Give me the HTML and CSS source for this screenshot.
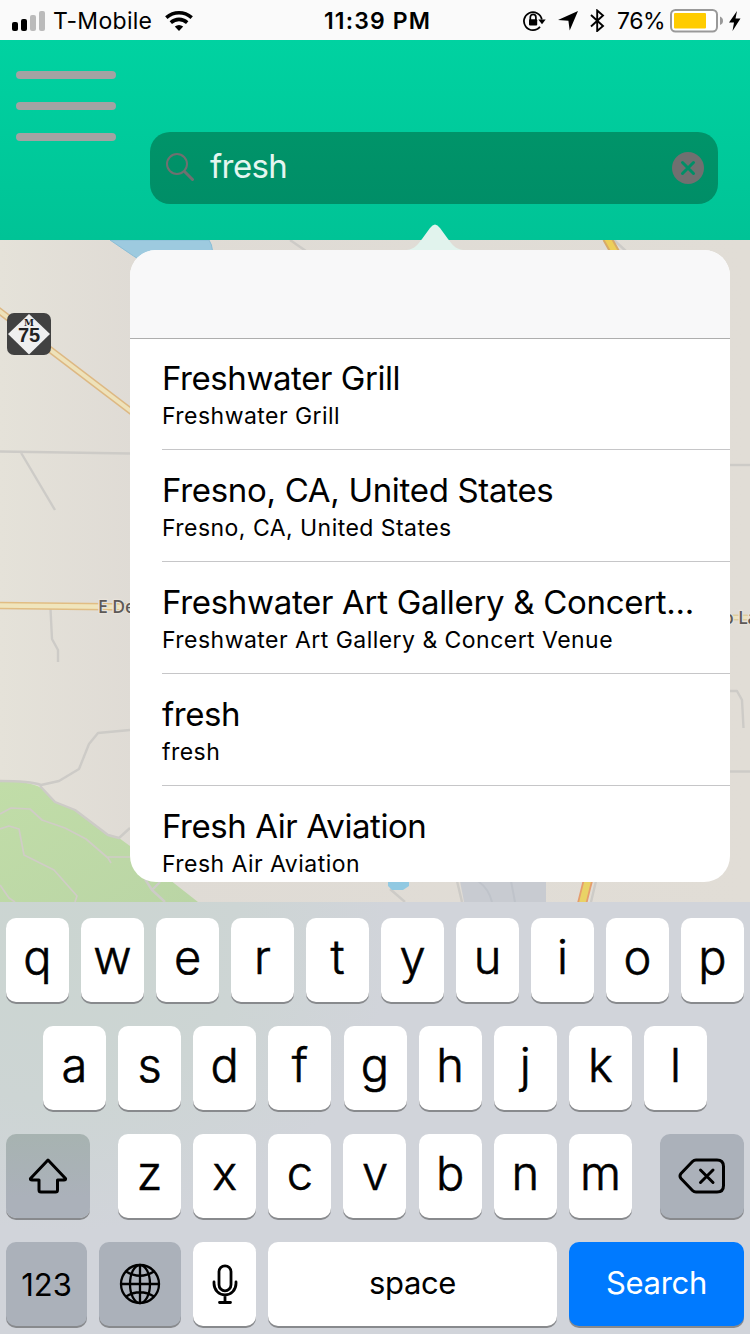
FILE: index.html
```html
<!DOCTYPE html>
<html lang="en">
<head>
<meta charset="utf-8">
<title>Map search</title>
<link rel="stylesheet" href="styles.css">
</head>
<body>
<div class="screen">
  <div class="status">
    <div class="status-left">
      <svg class="signal" width="34" height="20" viewBox="0 0 34 20"><rect x="0" y="11" width="6" height="9" rx="2"/><rect x="9" y="8" width="6" height="12" rx="2"/><rect x="18" y="4" width="6" height="16" rx="2" fill="#bbb"/><rect x="27" y="0" width="6" height="20" rx="2" fill="#bbb"/></svg>
      <span class="carrier">T-Mobile</span>
      <svg class="wifi" width="28" height="20" viewBox="0 0 28 20"><g fill="none" stroke="#000" stroke-width="3.6"><path d="M1.3 6.7Q7 1.8 14 1.8T26.7 6.7"/><path d="M5.8 11.6Q9.5 8.4 14 8.4T22.2 11.6"/></g><path d="M14 20L9.8 15.6Q14 12.3 18.2 15.6Z"/></svg>
    </div>
    <span class="clock">11:39 PM</span>
    <div class="status-right">
      <svg class="lock" width="23" height="22" viewBox="0 0 23 22"><g fill="none" stroke="#000"><path stroke-width="1.8" d="M18.800 9.500A9 9 0 1 0 17 16.800"/><path stroke-width="1.7" d="M7.300 10V7.200a2.800 2.800 0 0 1 5.600 0V10"/></g><rect x="6" y="9.300" width="8.200" height="6.200" rx="1"/><path d="M15.300 9.600h7.400l-3.700 4.600z"/></svg>
      <svg class="arrow" width="20" height="20" viewBox="0 0 20 20"><path d="M20 0L11.7 19.5L10.4 9.8L0 9Z"/></svg>
      <svg class="bt" width="15" height="23" viewBox="0 0 15 23"><path fill="none" stroke="#000" stroke-width="1.9" d="M1 6L13 17L7.2 22V1.5L13 6.5L1 17.5"/></svg>
      <span class="percent">76%</span>
      <svg class="battery" width="53" height="24" viewBox="0 0 53 24"><rect x="1" y="1" width="46" height="21.5" rx="4.5" fill="#fff" stroke="#999" stroke-width="2"/><path d="M50 7.5q3 1.2 3 4.3t-3 4.3z" fill="#999"/><rect x="4" y="4" width="32" height="15.5" rx="1" fill="#fc0"/></svg>
      <svg class="bolt" width="12" height="20" viewBox="0 0 12 20"><path d="M8 0L0 11.6H5L3.5 20L11.5 7.6H6.5Z"/></svg>
    </div>
  </div>

  <div class="header">
    <div class="menu"><i></i><i></i><i></i></div>
    <div class="search">
      <svg class="glass" width="30" height="30" viewBox="0 0 30 30"><g fill="none" stroke="#707070"><circle cx="11" cy="11" r="10" stroke-width="2"/><path stroke-width="3" stroke-linecap="round" d="M19 19L26.500 26.500"/></g></svg>
      <span class="query">fresh</span>
      <svg class="clear" width="32" height="32" viewBox="0 0 32 32"><circle cx="16" cy="16" r="16" fill="#707070"/><path d="M10.5 10.5L21.5 21.5M21.5 10.5L10.5 21.5" stroke="#008f67" stroke-width="3" stroke-linecap="round"/></svg>
    </div>
  </div>

  <div class="map">
    <svg class="map-art" width="750" height="662" viewBox="0 240 750 662">
      <defs><linearGradient id="land"><stop offset="0" stop-color="#e5e2d9"/><stop offset=".18" stop-color="#dfdbd5"/><stop offset="1" stop-color="#e1ddd6"/></linearGradient>
      <linearGradient id="park" x1="0" y1="0" x2="1" y2="1"><stop offset="0" stop-color="#c1dda8"/><stop offset="1" stop-color="#bad5a5"/></linearGradient></defs>
      <rect y="240" width="750" height="662" fill="url(#land)"/>
      <path d="M110 240Q132 256 160 272H212Q215 248 209 240Z" fill="#9dcadf" stroke="#8abdd6"/>
      <path d="M0 781Q30 781 41 788L55 802L75 810L108 835L119 838L130 846L170 880L198 902H0Z" fill="url(#park)"/>
      <g fill="none" stroke="#cdcbc7" stroke-width="2.4" stroke-linejoin="round">
        <path d="M0 451.500L130 453.500M20 451L55 510"/>
        <path d="M50.500 609L52 639L58 650V662"/>
        <path d="M0 781Q30 781 41 785L59 781L79 769L89 744L98 733L130 730"/>
        <path d="M40 786L55 802L75 810L108 835L119 838L130 828"/>
        <path d="M145 879L152 890L165 902M160 882L152 890M290 240L306 251M614 240L627 252"/>
        <path d="M730 465H750"/>
        <path d="M730 691H737L742 700L743.500 728M730 771.500H750"/>
        <path d="M390 889L405 902M457 881L462 902M596 881L591 902"/>
      </g>
      <path d="M460 881H546V902H464Z" fill="#c8cbd1"/>
      <path d="M478 881Q489 889 492 902M511 881L515 902" fill="none" stroke="#bfc3ca" stroke-width="2"/>
      <g fill="none" stroke="#d0ccc6" stroke-width="1.7" stroke-linejoin="round">
        <path d="M0 814L11 808L30 809L42 820L65 828L86 839L108 858L111 863M107 857H130"/>
        <path d="M0 829L9 826L19 829L24 855L54 870L77 896L75 902M0 885L9 898L15 902"/>
      </g>
      <path d="M388 881H409V886L403 890H392L388 886Z" fill="#91c9e2"/>
      <g fill="none">
        <path d="M-2 310L132 412" stroke="#ddb883" stroke-width="7"/><path d="M-2 310L132 412" stroke="#eee2ba" stroke-width="4"/>
        <path d="M0 605.500L130 607" stroke="#e1bd83" stroke-width="7.500"/><path d="M0 605.500L130 607" stroke="#f0e5bc" stroke-width="4.500"/>
        <path d="M730 617.500H750" stroke="#decca0" stroke-width="6"/><path d="M730 617.500H750" stroke="#eee3c0" stroke-width="3"/>
        <path d="M607 238L616 254" stroke="#d6aa68" stroke-width="10"/><path d="M607 238L616 254" stroke="#edcf58" stroke-width="6"/>
        <path d="M588 880L582 904" stroke="#e59d6d" stroke-width="10"/><path d="M588 880L582 904" stroke="#e9d266" stroke-width="6.500"/>
      </g>
      <g class="road-name"><text x="98" y="612.500">E De</text><text x="723" y="624">o La</text></g>
      <rect x="7" y="313" width="44" height="42" rx="7" fill="#414141"/>
      <path d="M29 314L50 334L29 354.500L8 334Z" fill="#efefef"/>
      <text class="shield-m" x="29" y="326">M</text><text class="shield-n" x="29" y="342">75</text>
    </svg>
  </div>

  <div class="popover">
    <svg class="tip" width="60" height="27" viewBox="0 0 60 27"><path d="M2 26C10 25 13 20 17 15L25 4Q30 -3 35 4L43 15C47 20 50 25 58 26V27H2Z" fill="#e1f3ed"/></svg>
    <div class="results">
      <div class="results-head"></div>
      <div class="row first"><div class="title">Freshwater Grill</div><div class="sub">Freshwater Grill</div></div>
      <div class="row"><div class="title long">Fresno, CA, United States</div><div class="sub">Fresno, CA, United States</div></div>
      <div class="row"><div class="title long">Freshwater Art Gallery &amp; Concert...</div><div class="sub">Freshwater Art Gallery &amp; Concert Venue</div></div>
      <div class="row"><div class="title">fresh</div><div class="sub">fresh</div></div>
      <div class="row"><div class="title">Fresh Air Aviation</div><div class="sub">Fresh Air Aviation</div></div>
    </div>
  </div>

  <div class="keyboard">
    <div class="keys"><b>q</b><b>w</b><b>e</b><b>r</b><b>t</b><b>y</b><b>u</b><b>i</b><b>o</b><b>p</b></div>
    <div class="keys home"><b>a</b><b>s</b><b>d</b><b>f</b><b>g</b><b>h</b><b>j</b><b>k</b><b>l</b></div>
    <div class="keys third">
      <b class="dark wide shift"><svg width="40" height="36" viewBox="0 0 40 36"><path fill="none" stroke="#000" stroke-width="3" stroke-linejoin="round" d="M20 2L37.500 20.500Q38 22 36 22H29.500V32Q29.500 34 27.500 34H13Q11 34 11 32V22H4Q2 22 2.500 20.500Z"/></svg></b>
      <div class="letters"><b>z</b><b>x</b><b>c</b><b>v</b><b>b</b><b>n</b><b>m</b></div>
      <b class="dark wide"><svg width="48" height="36" viewBox="0 0 48 36"><g fill="none" stroke="#000" stroke-width="3" stroke-linejoin="round" stroke-linecap="round"><path d="M18 2H39Q45.500 2 45.500 8.500V27.500Q45.500 34 39 34H18Q16 34 14.500 32.500L3 20.500Q1 18 3 15.500L14.500 3.500Q16 2 18 2Z"/><path d="M22.500 12L35 24.500M35 12L22.500 24.500"/></g></svg></b>
    </div>
    <div class="keys fourth">
      <b class="dark num">123</b>
      <b class="dark globe"><svg width="42" height="42" viewBox="0 0 42 42"><g fill="none" stroke="#000" stroke-width="2.300"><circle cx="21" cy="21" r="19"/><ellipse cx="21" cy="21" rx="10" ry="19"/><path d="M21 2V40M2 21H40M7 8.500Q21 17 35 8.500M7 33.500Q21 25 35 33.500"/></g></svg></b>
      <b class="mic"><svg width="26" height="40" viewBox="0 0 26 40"><g fill="none" stroke="#000" stroke-width="2.800" stroke-linecap="round"><rect x="7" y="1.800" width="12" height="25" rx="6"/><path d="M2 18V19.500A11 11.500 0 0 0 24 19.500V18M13 31V38M7.500 38.500H18.500"/></g></svg></b>
      <b class="space">space</b>
      <b class="go">Search</b>
    </div>
  </div>
</div>
</body>
</html>
```
FILE: styles.css
```css
* { box-sizing: border-box; }
body { margin: 0; font-family: Inter, "Liberation Sans", sans-serif; color: #000; }
svg { display: block; flex: none; }
.screen { position: relative; width: 750px; height: 1334px; overflow: hidden; display: flex; flex-direction: column; }

.status { height: 40px; flex: none; background: #fafafa; display: grid; grid-template-columns: 1fr auto 1fr; align-items: center; font-size: 23px; line-height: 40px; white-space: nowrap; }
.status span { padding-top: 1px; }
.status-left { display: flex; align-items: center; padding-left: 12px; }
.carrier { margin-left: 7px; width: 105px; letter-spacing: .3px; }
.wifi { margin-left: 7px; }
.clock { font-weight: 600; letter-spacing: 1.15px; padding-left: 5px; }
.status-right { display: flex; align-items: center; justify-content: flex-end; padding-right: 9px; }
.arrow { margin-left: 12px; }
.bt { margin-left: 12px; }
.percent { margin-left: 12px; width: 48px; letter-spacing: -.5px; }
.battery { margin-left: 5px; }
.bolt { margin-left: 6px; }

.header { height: 200px; flex: none; background: linear-gradient(#00d2a1, #00c396); display: flex; padding: 30px 32px 0 16px; }
.menu { width: 100px; display: flex; flex-direction: column; gap: 23px; padding-top: 1px; }
.menu i { height: 8px; border-radius: 4px; background: #a3a3a3; }
.search { margin: 62px 0 0 34px; width: 568px; height: 72px; border-radius: 20px; background: linear-gradient(#009469, #008e67); display: flex; align-items: center; padding: 0 14px 0 16px; }
.query { flex: 1; margin-left: 14px; font-size: 33px; line-height: 40px; letter-spacing: -.6px; color: #e4f6f0; padding-bottom: 4px; }

.map { height: 662px; flex: none; }
.road-name { font: 500 17.5px "Noto Sans", sans-serif; fill: #5d5957; stroke: #e7e2da; stroke-width: 2.5px; paint-order: stroke; }
.shield-m { font: bold 9px "DejaVu Serif", serif; text-anchor: middle; fill: #222; }
.shield-n { font: bold 20px "Liberation Sans", sans-serif; text-anchor: middle; fill: #222; }

.popover { position: absolute; left: 130px; top: 250px; width: 600px; }
.tip { position: absolute; left: 275px; top: -26px; }
.results { position: relative; height: 632px; border-radius: 26px; background: #fff; overflow: hidden; }
.results-head { height: 89px; background: #f8f8f9; border-bottom: 1px solid #aeaeae; }
.row { height: 112px; margin-left: 32px; border-bottom: 1px solid #c6c6c8; padding-top: 19px; white-space: nowrap; }
.row.first { height: 111px; padding-top: 18px; }
.title { font-size: 33px; line-height: 42px; letter-spacing: -.43px; }
.title.long { letter-spacing: -.31px; }
.sub { font-size: 23px; line-height: 30px; margin-top: 2px; letter-spacing: .46px; }

.keyboard { height: 432px; flex: none; padding: 16px 6px 0; display: flex; flex-direction: column; gap: 24px; background: radial-gradient(ellipse 330px 290px at 60px 40px, #cbd5d1 0, #cdd5d4 55%, rgba(209,212,218,0) 100%), #d1d4da; }
.keys, .letters { display: flex; justify-content: space-between; }
.keys { height: 84px; }
.home { padding: 0 37px; }
.letters { width: 514px; }
.keys b { width: 63px; height: 84px; border-radius: 10px; background: #fff; box-shadow: 0 2px 0 #888a8d; display: flex; align-items: center; justify-content: center; font-weight: 300; font-size: 47px; line-height: 84px; padding-bottom: 7px; -webkit-text-stroke: .6px currentColor; }
.keys b.dark { background: #abb1ba; padding-bottom: 0; }
.keys b.wide { width: 84px; }
.keys b.shift { background: linear-gradient(#a7b3b1, #abb1ba 75%); }
.keys b.num, .keys b.space, .keys b.go { font-size: 31px; font-weight: 400; -webkit-text-stroke: 0; }
.keys b.num { width: 81px; padding-top: 2px; }
.keys b.globe { width: 82px; }
.keys b.mic { padding-bottom: 0; }
.keys b.space { width: 289px; letter-spacing: -.4px; padding-bottom: 2px; }
.keys b.go { width: 175px; letter-spacing: -.3px; background: #007aff; color: #fff; padding-bottom: 2px; }
```
